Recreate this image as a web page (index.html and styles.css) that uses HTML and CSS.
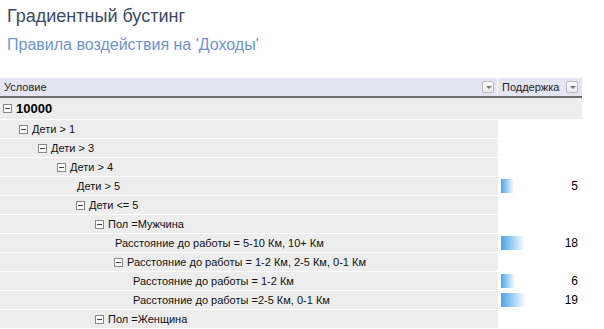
FILE: index.html
```html
<!DOCTYPE html>
<html lang="ru">
<head>
<meta charset="utf-8">
<link rel="stylesheet" href="styles.css">
</head>
<body>
<div class="titles">
  <h1 class="title">Градиентный бустинг</h1>
  <h2 class="subtitle">Правила воздействия на 'Доходы'</h2>
</div>
<div class="table">
  <div class="head">
    <div class="hcell cond"><span>Условие</span><span class="dd"></span></div>
    <div class="hcell sup"><span>Поддержка</span><span class="dd"></span></div>
  </div>
  <div class="row root"><div class="cell cond lvl0"><span class="tog"></span><span class="rootlabel">10000</span></div></div>
  <div class="row"><div class="cell cond lvl1"><span class="tog"></span>Дети &gt; 1</div><div class="cell sup"></div></div>
  <div class="row"><div class="cell cond lvl2"><span class="tog"></span>Дети &gt; 3</div><div class="cell sup"></div></div>
  <div class="row"><div class="cell cond lvl3"><span class="tog"></span>Дети &gt; 4</div><div class="cell sup"></div></div>
  <div class="row"><div class="cell cond lvl4 leaf">Дети &gt; 5</div><div class="cell sup"><span class="bar" style="width:13px"></span><span class="num">5</span></div></div>
  <div class="row"><div class="cell cond lvl4"><span class="tog"></span>Дети &lt;= 5</div><div class="cell sup"></div></div>
  <div class="row"><div class="cell cond lvl5"><span class="tog"></span>Пол =Мужчина</div><div class="cell sup"></div></div>
  <div class="row"><div class="cell cond lvl6 leaf">Расстояние до работы = 5-10 Км, 10+ Км</div><div class="cell sup"><span class="bar" style="width:24px"></span><span class="num">18</span></div></div>
  <div class="row"><div class="cell cond lvl6"><span class="tog"></span>Расстояние до работы = 1-2 Км, 2-5 Км, 0-1 Км</div><div class="cell sup"></div></div>
  <div class="row"><div class="cell cond lvl7 leaf">Расстояние до работы = 1-2 Км</div><div class="cell sup"><span class="bar" style="width:14px"></span><span class="num">6</span></div></div>
  <div class="row"><div class="cell cond lvl7 leaf">Расстояние до работы =2-5 Км, 0-1 Км</div><div class="cell sup"><span class="bar" style="width:25px"></span><span class="num">19</span></div></div>
  <div class="row"><div class="cell cond lvl5"><span class="tog"></span>Пол =Женщина</div><div class="cell sup"></div></div>
</div>
</body>
</html>
```
FILE: styles.css
```css
html, body {
  margin: 0;
  padding: 0;
  background: #ffffff;
  font-family: "Liberation Sans", Arial, sans-serif;
  overflow: hidden;
}
.titles {
  padding: 5px 0 0 7px;
  height: 73px;
  box-sizing: border-box;
}
.title {
  margin: 0;
  font-size: 18px;
  font-weight: normal;
  line-height: 22px;
  color: #3a4c68;
}
.subtitle {
  margin: 8px 0 0 0;
  font-size: 16px;
  font-weight: normal;
  line-height: 19px;
  color: #6c95cf;
}
.table {
  width: 582px;
  font-size: 11px;
  color: #111;
}
.head {
  display: flex;
  height: 18px;
  background: #e5e5f2;
  border-bottom: 2px solid #6e6e72;
  margin-top: 5px;
}
.hcell {
  display: flex;
  align-items: center;
  justify-content: space-between;
  box-sizing: border-box;
  color: #222;
}
.hcell.cond { width: 498px; padding: 0 3px 0 4px; border-right: 1px solid #fff; }
.hcell.sup { width: 84px; padding: 0 4px 0 4px; }
.dd {
  width: 12px;
  height: 12px;
  border: 1px solid #b9b9c0;
  border-radius: 2px;
  background: linear-gradient(#fdfdfd, #e9e9ec);
  position: relative;
  box-sizing: border-box;
}
.dd::after {
  content: "";
  position: absolute;
  left: 3px;
  top: 4px;
  border-left: 3px solid transparent;
  border-right: 3px solid transparent;
  border-top: 3px solid #777;
}
.row {
  display: flex;
  height: 19px;
}
.row.root {
  height: 22px;
}
.row.root .cond {
  width: 582px;
  height: 21px;
  padding-left: 3px;
}
.cell {
  box-sizing: border-box;
  display: flex;
  align-items: center;
  white-space: nowrap;
}
.cell.cond {
  width: 498px;
  height: 18px;
  background: #ededed;
}
.cell.sup {
  width: 84px;
  height: 18px;
  background: #fff;
  padding: 0 4px 0 3px;
  justify-content: space-between;
}
.rootlabel {
  font-weight: bold;
  font-size: 13px;
  color: #000;
}
.tog {
  width: 9px;
  height: 9px;
  border: 1px solid #888;
  box-sizing: border-box;
  margin-right: 4px;
  position: relative;
  background: #fff;
  flex: none;
}
.tog::after {
  content: "";
  position: absolute;
  left: 1px;
  right: 1px;
  top: 3px;
  height: 1px;
  background: #444;
}
.lvl1 { padding-left: 19px; }
.lvl2 { padding-left: 38px; }
.lvl3 { padding-left: 57px; }
.lvl4 { padding-left: 76px; }
.lvl5 { padding-left: 95px; }
.lvl6 { padding-left: 114px; }
.lvl7 { padding-left: 133px; }
.lvl4.leaf { padding-left: 77px; }
.lvl6.leaf { padding-left: 115px; }
.lvl7.leaf { padding-left: 133px; }
.bar {
  display: block;
  height: 14px;
  background: linear-gradient(to right, #49a5e8, #ffffff);
}
.num {
  margin-left: auto;
  font-size: 12px;
  color: #000;
}
```
